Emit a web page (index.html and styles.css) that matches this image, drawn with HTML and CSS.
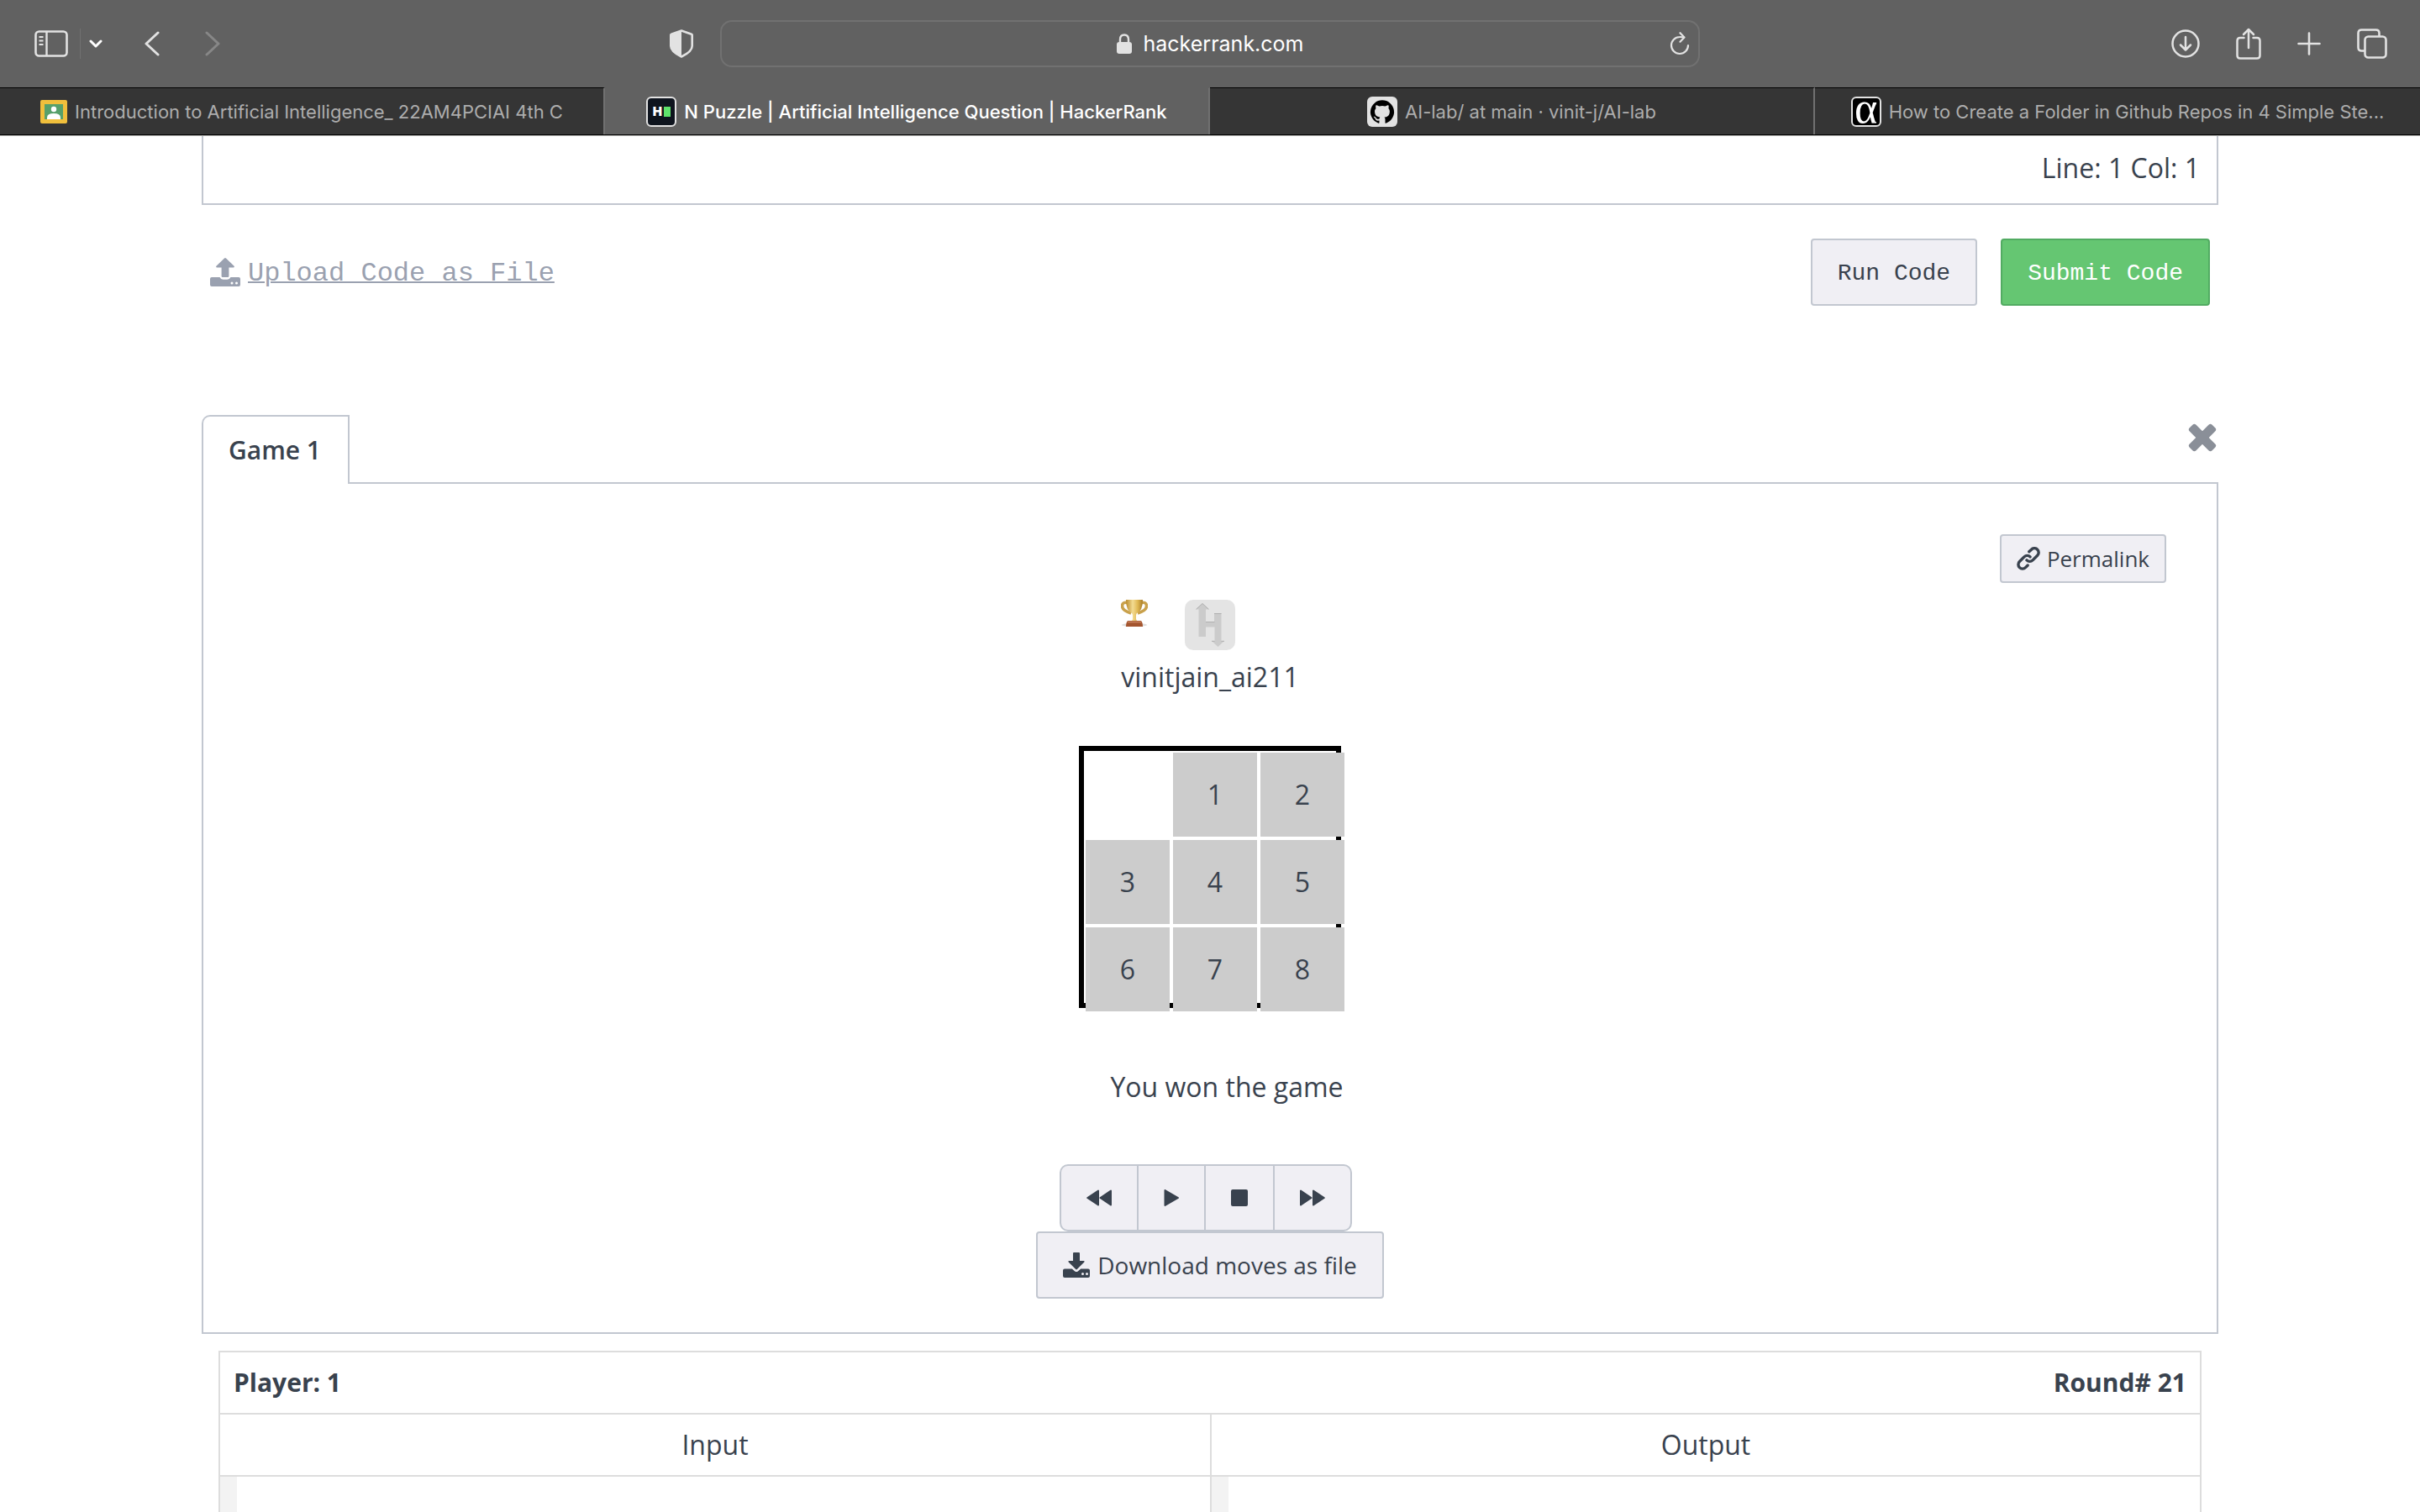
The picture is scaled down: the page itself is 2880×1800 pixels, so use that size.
FILE: index.html
```html
<!DOCTYPE html>
<html lang="en">
<head>
<meta charset="utf-8">
<title>N Puzzle | Artificial Intelligence Question | HackerRank</title>
<link rel="stylesheet" href="styles.css">
</head>
<body>
<header class="browser">
  <div class="toolbar">
    <div class="tools tools-start">
      <button class="tool" aria-label="Show sidebar"><svg width="40" height="32" viewBox="0 0 40 32" fill="none" stroke="currentColor"><rect x="1.5" y="1.5" width="37" height="29" rx="4" stroke-width="2.6"/><path d="M14.500 1v30" stroke-width="2.400"/><path d="M5.500 8h5M5.500 12.500h5M5.500 17h5" stroke-width="2"/></svg></button>
      <span class="tool-divider"></span>
      <button class="tool tool-menu" aria-label="Tab groups"><svg width="16" height="12" viewBox="0 0 16 12" fill="none" stroke="#fff" stroke-width="3" stroke-linecap="round" stroke-linejoin="round"><path d="M2 3l6 6 6-6"/></svg></button>
      <button class="tool tool-back" aria-label="Back"><svg width="18" height="30" viewBox="0 0 18 30" fill="none" stroke="currentColor" stroke-width="3" stroke-linecap="round" stroke-linejoin="round"><path d="M16 2L2 15l14 13"/></svg></button>
      <button class="tool tool-forward" aria-label="Forward" disabled><svg width="18" height="30" viewBox="0 0 18 30" fill="none" stroke="currentColor" stroke-width="3" stroke-linecap="round" stroke-linejoin="round"><path d="M2 2l14 13L2 28"/></svg></button>
      <button class="tool tool-shield" aria-label="Privacy report"><svg width="28" height="34" viewBox="0 0 28 34"><path d="M14 1.500L2 5.800q-.7.200-.7 1v13c0 6 7 10 12.700 12.700 5.700-2.700 12.700-6.700 12.700-12.700v-13q0-.8-.7-1z" fill="none" stroke="currentColor" stroke-width="2.600" stroke-linejoin="round"/><path d="M14 1.500L1.500 6v14c0 6 7 10 12.500 12.500z" fill="currentColor"/></svg></button>
    </div>
    <div class="address">
      <svg width="18" height="24" viewBox="0 0 18 24"><rect x="0" y="10" width="18" height="14" rx="3" fill="currentColor"/><path d="M4 11V7q0-5.500 5-5.500T14 7v4" fill="none" stroke="currentColor" stroke-width="2.400"/></svg>
      <span class="address-host">hackerrank.com</span>
      <button class="tool address-reload" aria-label="Reload"><svg width="24" height="28" viewBox="0 0 24 28" fill="none" stroke="currentColor" stroke-width="2.200" stroke-linecap="round" stroke-linejoin="round"><path d="M17 6.800q-2-.9-5-.8A10 10 0 1 0 22 16"/><path d="M12.500 1.200l5 5.300-5 5.200"/></svg></button>
    </div>
    <div class="tools tools-end">
      <button class="tool" aria-label="Downloads"><svg width="34" height="34" viewBox="0 0 34 34" fill="none" stroke="currentColor" stroke-width="2.500" stroke-linecap="round" stroke-linejoin="round"><circle cx="17" cy="17" r="15.500"/><path d="M17 9v15M11 18.500l6 6 6-6"/></svg></button>
      <button class="tool" aria-label="Share"><svg width="30" height="38" viewBox="0 0 30 38" fill="none" stroke="currentColor" stroke-width="2.500" stroke-linecap="round" stroke-linejoin="round"><path d="M9.500 12H5q-3.500 0-3.500 3.500v17.500Q1.500 36.500 5 36.500h20q3.500 0 3.500-3.500V15.500Q28.500 12 25 12h-4.500"/><path d="M15 24V2M9 8l6-6 6 6"/></svg></button>
      <button class="tool" aria-label="New tab"><svg width="28" height="28" viewBox="0 0 28 28" fill="none" stroke="currentColor" stroke-width="2.600" stroke-linecap="round"><path d="M14 1.500v25M1.500 14h25"/></svg></button>
      <button class="tool" aria-label="Show tab overview"><svg width="36" height="36" viewBox="0 0 36 36" fill="none" stroke="currentColor" stroke-width="2.600" stroke-linejoin="round"><rect x="9.500" y="9.500" width="25" height="25" rx="4"/><path d="M9.500 26.500H5.500q-4 0-4-4v-17q0-4 4-4h17q4 0 4 4v4"/></svg></button>
    </div>
  </div>
  <nav class="tabs" aria-label="Open tabs">
    <a class="tab" href="#classroom">
      <svg width="32" height="28" viewBox="0 0 32 28"><rect width="32" height="28" rx="2" fill="#f0bf3c"/><rect x="5" y="5" width="22" height="18" fill="#57a06a"/><circle cx="16" cy="11" r="3.200" fill="#fff"/><path d="M8 23v-2q0-5 8-5t8 5v2z" fill="#fff"/></svg>
      <span class="tab-title">Introduction to Artificial Intelligence_ 22AM4PCIAI 4th C</span>
    </a>
    <a class="tab tab-active" href="#puzzle" aria-current="page">
      <span class="favicon favicon-rank">H<i class="favicon-block"></i></span>
      <span class="tab-title">N Puzzle | Artificial Intelligence Question | HackerRank</span>
    </a>
    <a class="tab" href="#lab">
      <svg width="36" height="36" viewBox="0 0 36 36"><rect width="36" height="36" rx="6" fill="#e2e2e2"/><path transform="translate(4 4) scale(1.166)" fill="#000" d="M12 .3a12 12 0 0 0-3.800 23.400c.6.100.8-.3.800-.6v-2c-3.300.7-4-1.600-4-1.600-.6-1.400-1.400-1.800-1.400-1.800-1-.7.1-.7.100-.7 1.200 0 1.900 1.200 1.900 1.200 1 1.800 2.800 1.300 3.500 1 0-.8.400-1.300.7-1.600-2.700-.3-5.500-1.300-5.500-6 0-1.200.5-2.300 1.300-3.100-.2-.4-.6-1.600 0-3.200 0 0 1-.3 3.400 1.200a11.500 11.500 0 0 1 6 0c2.300-1.500 3.300-1.200 3.300-1.200.6 1.600.2 2.800 0 3.200.9.800 1.300 1.900 1.300 3.200 0 4.600-2.800 5.600-5.500 5.900.5.400.9 1 .9 2.200v3.300c0 .3.100.7.800.6A12 12 0 0 0 12 .3"/></svg>
      <span class="tab-title">AI-lab/ at main · vinit-j/AI-lab</span>
    </a>
    <a class="tab" href="#folder">
      <span class="favicon favicon-alpha">α</span>
      <span class="tab-title">How to Create a Folder in Github Repos in 4 Simple Ste...</span>
    </a>
  </nav>
</header>

<main class="page">
  <div class="editor-status">Line: 1 Col: 1</div>

  <div class="actions">
    <a class="upload" href="#upload">
      <svg width="36" height="36" viewBox="0 0 36 36" fill="currentColor"><path d="M17 1.400q1-.9 2 0l9.400 9.200q1.300 1.700-.7 1.900H22.400v10.300q0 1.200-1.200 1.200h-6.400q-1.200 0-1.200-1.200V12.500H8.300q-2-.2-.7-1.900z"/><path fill-rule="evenodd" d="M2 24h9.500q1.300 2.800 4 2.800h5q2.700 0 4-2.800H34q2 0 2 2v7q0 2-2 2H2q-2 0-2-2v-7q0-2 2-2zM26 29.500a1.500 1.500 0 1 0 0 3 1.500 1.500 0 0 0 0-3zm5.500 0a1.500 1.500 0 1 0 0 3 1.500 1.500 0 0 0 0-3z"/></svg>
      <span class="upload-text">Upload Code as File</span>
    </a>
    <div class="action-buttons">
      <button class="button button-code">Run Code</button>
      <button class="button button-code button-primary">Submit Code</button>
    </div>
  </div>

  <section class="game">
    <div class="game-head">
      <button class="game-tab">Game 1</button>
      <button class="game-close" aria-label="Close"><svg width="34" height="34" viewBox="0 0 34 34" fill="currentColor"><rect x="-2" y="11.500" width="38" height="11" rx="3" transform="rotate(45 17 17)"/><rect x="-2" y="11.500" width="38" height="11" rx="3" transform="rotate(-45 17 17)"/></svg></button>
    </div>
    <div class="game-panel">
      <div class="panel-tools">
        <button class="button button-small">
          <svg width="28" height="28" viewBox="0 0 28 28" fill="none" stroke="currentColor" stroke-width="3.400" stroke-linecap="round"><path d="M14.800 5.800l2.700-2.600a5 5 0 0 1 7.200 0 5 5 0 0 1 0 7.100l-5.600 5.600a5 5 0 0 1-7.100 0"/><path d="M12.600 21.800l-2.700 2.600a5 5 0 0 1-7.100 0 5 5 0 0 1 0-7.100l5.600-5.600a5 5 0 0 1 7.100 0" transform="translate(.6 .2)"/></svg>
          Permalink
        </button>
      </div>

      <div class="player">
        <div class="player-badges">
          <svg width="32" height="32" viewBox="0 0 32 32"><defs><linearGradient id="gold"><stop offset="0" stop-color="#b98a2c"/><stop offset=".4" stop-color="#f3dc92"/><stop offset=".7" stop-color="#e0b853"/><stop offset="1" stop-color="#a87c28"/></linearGradient></defs><ellipse cx="16" cy="30" rx="15" ry="2" fill="#ddd"/><path d="M9 3.500Q1.500 2 1.500 7.500T12 16M23 3.500q7.500-1.500 7.500 4T20 16" fill="none" stroke="#c9a14c" stroke-width="3.600"/><path d="M6 0h20q0 13-7 16-1 1-1 3v4q0 2 3 3H11q3-1 3-3v-4q0-2-1-3Q6 13 6 0z" fill="url(#gold)"/><path d="M8 25h16q2 2 2 7H6q0-5 2-7z" fill="#a4552f"/><path d="M8 26.500h16" stroke="#c98562" stroke-width="1.500"/></svg>
          <svg width="60" height="60" viewBox="0 0 60 60"><rect width="60" height="60" rx="10" fill="#e4e4e4"/><path d="M21 4.500l7.500 7H25V26h10V16h8.500v33H47l-7.500 7-7.500-7h3.500V32.500H25V44h-8.500V11.500H13.500z" fill="#cbcbcb"/><path d="M13.500 11.300l7.500-6.800 7.500 6.800M25 26.500h10.500M35 16.500h8.500M32 49.300h3.500M43.500 49.300h3.500" fill="none" stroke="#b0b0b0" stroke-width="1"/></svg>
        </div>
        <div class="player-name">vinitjain_ai211</div>
      </div>

      <div class="board">
        <span></span><span class="tile">1</span><span class="tile">2</span>
        <span class="tile">3</span><span class="tile">4</span><span class="tile">5</span>
        <span class="tile">6</span><span class="tile">7</span><span class="tile">8</span>
      </div>

      <p class="result">You won the game</p>

      <div class="playback">
        <button class="playback-button" aria-label="Rewind"><svg width="30" height="20" viewBox="0 0 30 20" fill="currentColor" stroke="currentColor" stroke-width="2" stroke-linejoin="round"><path d="M14 1.500v17L1.200 10zM29 1.500v17L16.500 10z"/></svg></button>
        <button class="playback-button" aria-label="Play"><svg width="18" height="20" viewBox="0 0 18 20" fill="currentColor" stroke="currentColor" stroke-width="2" stroke-linejoin="round"><path d="M1.500 1v18L17 10z"/></svg></button>
        <button class="playback-button" aria-label="Stop"><svg width="20" height="20" viewBox="0 0 20 20" fill="currentColor"><rect width="20" height="20" rx="2"/></svg></button>
        <button class="playback-button" aria-label="Fast forward"><svg width="30" height="20" viewBox="0 0 30 20" fill="currentColor" stroke="currentColor" stroke-width="2" stroke-linejoin="round"><path d="M1 1.500v17L13.500 10zM16 1.500v17L28.800 10z"/></svg></button>
      </div>
      <button class="button button-download">
        <svg width="32" height="30" viewBox="0 0 32 30" fill="currentColor"><path d="M13 0h6q1 0 1 1v9h4.500q2 .2.600 1.800l-8.300 8.300q-.8.700-1.600 0l-8.300-8.300Q5.500 10.200 7.500 10H12V1q0-1 1-1z"/><path fill-rule="evenodd" d="M2 19.500h8.800l3.400 3q1.800 1.200 3.600 0l3.400-3H30q2 0 2 2V28q0 2-2 2H2q-2 0-2-2v-6.500q0-2 2-2zM23.500 24a1.500 1.500 0 1 0 0 3 1.500 1.500 0 0 0 0-3zm5 0a1.500 1.500 0 1 0 0 3 1.500 1.500 0 0 0 0-3z"/></svg>
        Download moves as file
      </button>
    </div>
  </section>

  <table class="moves">
    <thead>
      <tr class="moves-round"><th class="moves-player">Player: 1</th><th class="moves-number">Round# 21</th></tr>
      <tr class="moves-labels"><th>Input</th><th>Output</th></tr>
    </thead>
    <tbody>
      <tr class="moves-data"><td></td><td></td></tr>
    </tbody>
  </table>
</main>
</body>
</html>
```
FILE: styles.css
```css
* {
  box-sizing: border-box;
}

body {
  margin: 0;
  height: 100vh;
  display: flex;
  flex-direction: column;
  overflow: hidden;
  background: #fff;
  color: #39424e;
  font: 32px/48px "Open Sans", sans-serif;
}

button {
  margin: 0;
  padding: 0;
  border: 0;
  background: none;
  color: inherit;
  font: inherit;
}

svg {
  display: block;
  flex: none;
}

/* Browser chrome */

.browser {
  flex: none;
  border-bottom: 1px solid #b5b5b2;
  background: #616161;
  color: #e2e2e2;
  font-family: Inter, sans-serif;
}

.toolbar {
  display: grid;
  grid-template-columns: 1fr minmax(0, 1166px) 1fr;
  align-items: center;
  height: 104px;
}

.tools {
  display: flex;
  align-items: center;
}

.tools-start {
  padding: 0 32px 0 41px;
}

.tool-divider {
  width: 1px;
  height: 36px;
  margin-left: 14px;
  background: #717171;
}

.tool-menu {
  margin-left: 10px;
}

.tool-back {
  margin-left: 50px;
}

.tool-forward {
  margin-left: 54px;
  color: #878787;
}

.tool-shield {
  margin-left: auto;
}

.tools-end {
  justify-content: flex-end;
  gap: 43px;
  padding-right: 39px;
}

.address {
  display: flex;
  align-items: center;
  justify-content: center;
  height: 56px;
  position: relative;
  border: 2px solid #717171;
  border-radius: 14px;
}

.address-host {
  margin-left: 14px;
  color: #fff;
  font-size: 25px;
}

.address-reload {
  position: absolute;
  right: 10px;
}

.tabs {
  display: grid;
  grid-template-columns: repeat(4, minmax(0, 1fr));
  border-bottom: 1px solid #000;
}

.tab {
  display: flex;
  align-items: center;
  justify-content: center;
  gap: 9px;
  height: 56px;
  padding: 0 40px;
  border-top: 1px solid #000;
  border-right: 2px solid #717171;
  background: #353535;
  color: #adadad;
  font-size: 22px;
  text-decoration: none;
  white-space: nowrap;
}

.tab:last-child {
  border-right: 0;
}

.tab-active {
  border-top-color: #616161;
  background: #616161;
  color: #fff;
  font-weight: 500;
}

.tab-title {
  flex: none;
}

.favicon {
  display: flex;
  flex: none;
  align-items: center;
  justify-content: center;
  width: 36px;
  height: 36px;
  border: 2px solid #e2e2e2;
  border-radius: 6px;
  color: #fff;
}

.favicon-rank {
  gap: 2px;
  background: #0e141e;
  font-size: 15px;
  font-weight: 900;
}

.favicon-block {
  width: 8px;
  height: 12px;
  background: #5fe36c;
}

.favicon-alpha {
  padding-bottom: 8px;
  background: #000;
  font: 52px/28px "Liberation Serif", serif;
}

/* Page */

.page {
  flex: 1;
  min-height: 0;
  overflow: hidden;
  padding: 0 240px;
}

.editor-status {
  padding: 14px 20px 18px;
  border: 2px solid #c2c7d0;
  border-top: 0;
  text-align: right;
}

.actions {
  display: flex;
  align-items: center;
  justify-content: space-between;
  padding: 40px 10px 130px;
}

.action-buttons {
  display: flex;
  gap: 28px;
}

.upload {
  display: flex;
  align-items: center;
  gap: 9px;
  color: #9aa1b0;
  font-family: "Liberation Mono", monospace;
  text-decoration: none;
}

.upload-text {
  padding-top: 4px;
  text-decoration: underline;
  text-decoration-thickness: 2px;
}

.button {
  display: flex;
  align-items: center;
  gap: 9px;
  height: 80px;
  padding: 0 30px;
  border: 2px solid #c2c7d0;
  border-radius: 4px;
  background: #f0eff4;
  font-size: 28px;
}

.button-code {
  padding-top: 4px;
  font-family: "Liberation Mono", monospace;
}

.button-primary {
  border-color: #52ab62;
  background: #65c672;
  color: #fff;
}

.button-small {
  height: 58px;
  padding: 0 18px;
  gap: 8px;
  font-size: 26px;
}

/* Game viewer */

.game-head {
  display: flex;
  align-items: flex-start;
  justify-content: space-between;
  margin-bottom: -2px;
  position: relative;
}

.game-tab {
  height: 82px;
  padding: 0 32px 0 30px;
  border: 2px solid #c2c7d0;
  border-bottom: 0;
  border-top-left-radius: 10px;
  background: #fff;
  font-size: 30px;
  font-weight: 600;
}

.game-close {
  margin: 10px 2px 0 0;
  color: #8a8f98;
}

.game-panel {
  display: flex;
  flex-direction: column;
  align-items: center;
  padding: 60px 60px 40px;
  border: 2px solid #c2c7d0;
}

.panel-tools {
  align-self: flex-end;
  margin-bottom: 20px;
}

.player-badges {
  display: flex;
  align-items: flex-start;
  gap: 44px;
  margin-bottom: 8px;
}

.board {
  display: grid;
  grid-template-columns: repeat(3, 100px);
  grid-template-rows: repeat(3, 100px);
  gap: 4px;
  width: 312px;
  height: 312px;
  margin-top: 58px;
  padding: 2px;
  border: 6px solid #000;
}

.tile {
  display: grid;
  place-items: center;
  background: #ccc;
}

.result {
  margin: 70px 0 68px;
  padding-left: 40px;
}

.playback {
  display: flex;
  margin-right: 10px;
  overflow: hidden;
  border: 2px solid #c2c7d0;
  border-radius: 10px;
  background: #f0eff4;
}

.playback-button {
  height: 76px;
  padding: 0 30px;
}

.playback-button + .playback-button {
  border-left: 2px solid #c2c7d0;
}

/* Moves table */

.moves {
  width: calc(100% - 40px);
  margin: 20px 20px 0;
  border: 2px solid #ddd;
  border-spacing: 0;
  table-layout: fixed;
}

.moves th {
  height: 74px;
  padding: 0 16px;
  border-bottom: 2px solid #ddd;
  font-weight: 400;
}

.moves .moves-player,
.moves .moves-number {
  font-size: 30px;
  font-weight: 700;
}

.moves-player {
  text-align: left;
}

.moves-number {
  text-align: right;
}

.moves-labels th + th,
.moves-data td + td {
  border-left: 2px solid #ddd;
}

.moves-data td {
  height: 400px;
  padding: 0;
  background: linear-gradient(#f3f3f3, #f3f3f3) left / 20px 100% no-repeat;
}
```
